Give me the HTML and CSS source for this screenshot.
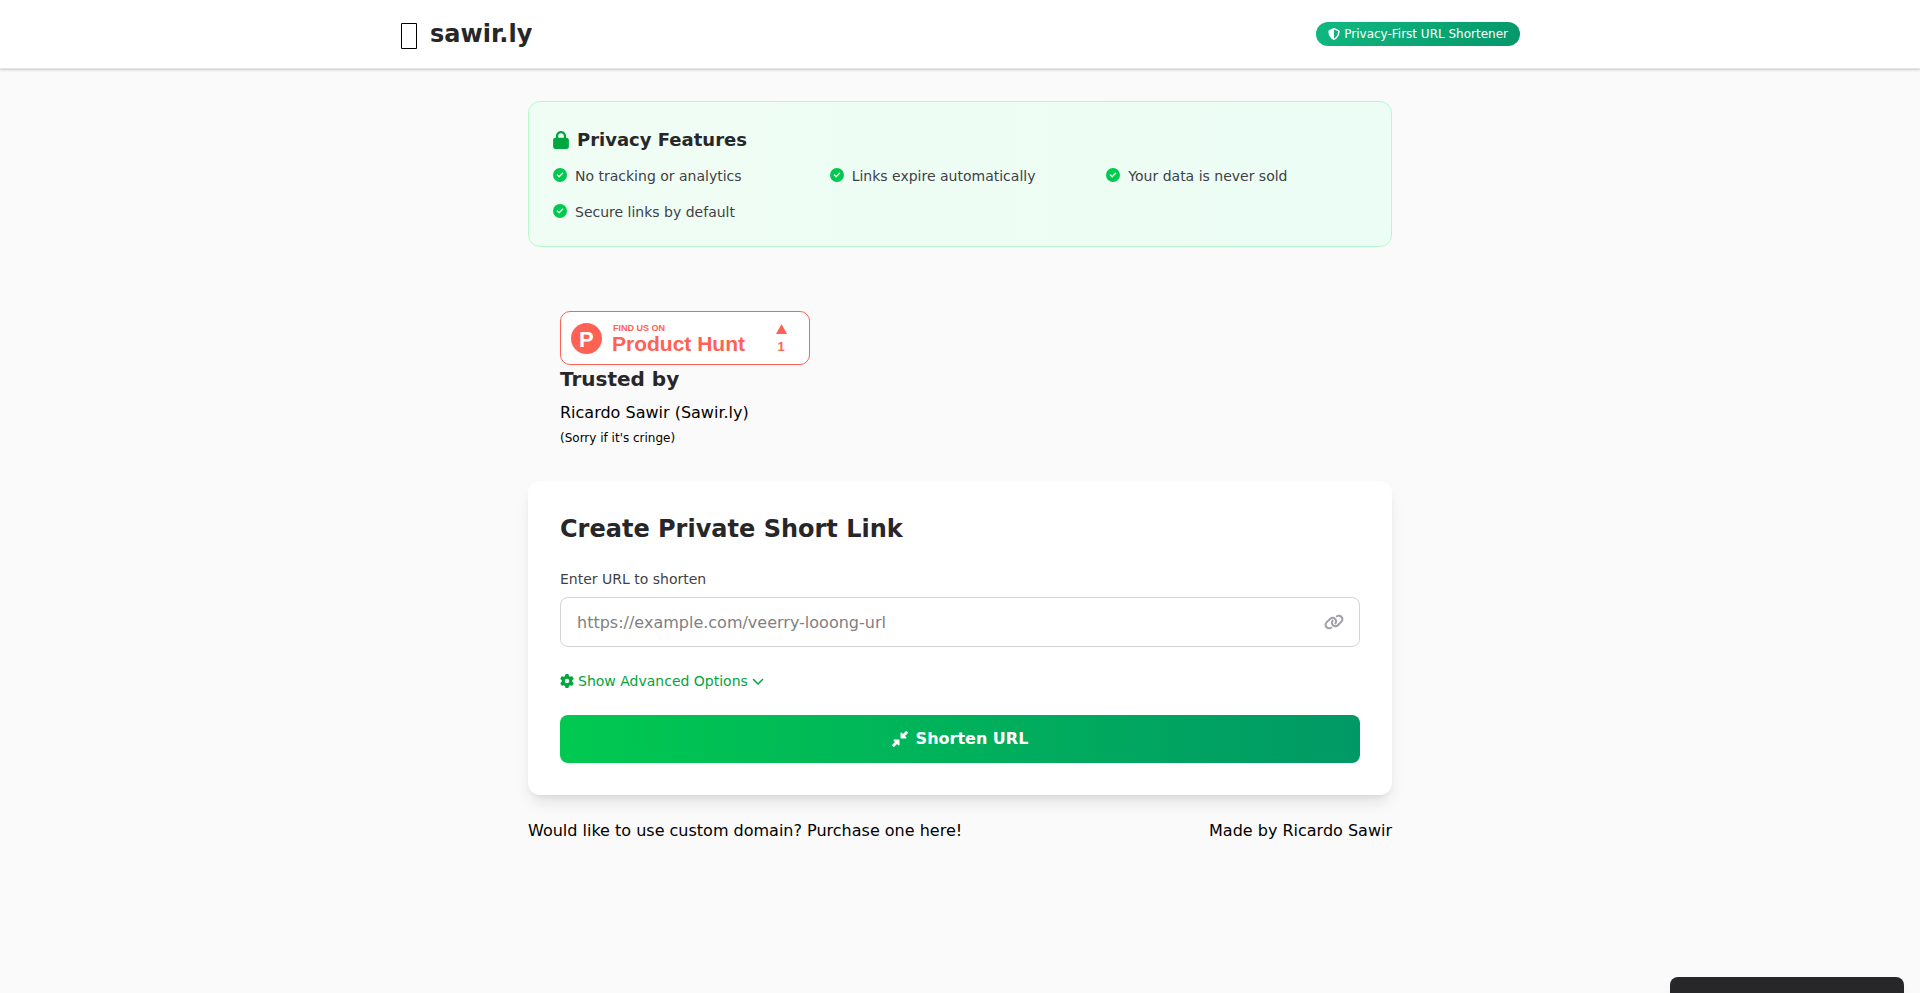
FILE: index.html
```html
<!DOCTYPE html>
<html lang="en">
<head>
<meta charset="utf-8">
<meta name="viewport" content="width=device-width, initial-scale=1">
<title>sawir.ly</title>
<link rel="stylesheet" href="styles.css">
</head>
<body>
<header class="site-header">
  <div class="header-inner">
    <div class="brand">
      <span class="brand-icon"><svg width="18" height="26" viewBox="0 0 18 26" aria-hidden="true"><path d="M1.5 0.5h15v25h-15z" fill="none" stroke="#000"/></svg></span>
      <h1 class="brand-name">sawir.ly</h1>
    </div>
    <span class="pill">
      <svg class="icon icon-12" viewBox="0 0 512 512" aria-hidden="true"><path d="M256 0c4.6 0 9.2 1 13.4 2.9L457.7 82.8c22 9.3 38.4 31 38.3 57.2c-.5 99.2-41.3 280.7-213.6 363.2c-16.7 8-36.1 8-52.8 0C57.3 420.7 16.5 239.2 16 140c-.1-26.2 16.3-47.9 38.3-57.2L242.7 2.9C246.8 1 251.4 0 256 0zm0 66.8V444.8C394 378 431.1 230.1 432 141.4L256 66.8l0 0z"/></svg>
      Privacy-First URL Shortener
    </span>
  </div>
</header>

<main class="page">
  <section class="features">
    <h2 class="features-title">
      <svg class="icon lock" viewBox="0 0 448 512" aria-hidden="true"><path d="M144 144v48H304V144c0-44.2-35.8-80-80-80s-80 35.8-80 80zM80 192V144C80 64.5 144.5 0 224 0s144 64.5 144 144v48h16c35.3 0 64 28.7 64 64V448c0 35.3-28.7 64-64 64H64c-35.3 0-64-28.7-64-64V256c0-35.3 28.7-64 64-64H80z"/></svg>
      Privacy Features
    </h2>
    <ul class="feature-list">
      <li class="feature"><svg class="icon check" viewBox="0 0 512 512" aria-hidden="true"><path d="M256 512A256 256 0 1 0 256 0a256 256 0 1 0 0 512zM369 209L241 337c-9.4 9.4-24.6 9.4-33.9 0l-64-64c-9.4-9.4-9.4-24.6 0-33.9s24.6-9.4 33.9 0l47 47L335 175c9.4-9.4 24.6-9.4 33.9 0s9.4 24.6 0 33.9z"/></svg>No tracking or analytics</li>
      <li class="feature"><svg class="icon check" viewBox="0 0 512 512" aria-hidden="true"><path d="M256 512A256 256 0 1 0 256 0a256 256 0 1 0 0 512zM369 209L241 337c-9.4 9.4-24.6 9.4-33.9 0l-64-64c-9.4-9.4-9.4-24.6 0-33.9s24.6-9.4 33.9 0l47 47L335 175c9.4-9.4 24.6-9.4 33.9 0s9.4 24.6 0 33.9z"/></svg>Links expire automatically</li>
      <li class="feature"><svg class="icon check" viewBox="0 0 512 512" aria-hidden="true"><path d="M256 512A256 256 0 1 0 256 0a256 256 0 1 0 0 512zM369 209L241 337c-9.4 9.4-24.6 9.4-33.9 0l-64-64c-9.4-9.4-9.4-24.6 0-33.9s24.6-9.4 33.9 0l47 47L335 175c9.4-9.4 24.6-9.4 33.9 0s9.4 24.6 0 33.9z"/></svg>Your data is never sold</li>
      <li class="feature"><svg class="icon check" viewBox="0 0 512 512" aria-hidden="true"><path d="M256 512A256 256 0 1 0 256 0a256 256 0 1 0 0 512zM369 209L241 337c-9.4 9.4-24.6 9.4-33.9 0l-64-64c-9.4-9.4-9.4-24.6 0-33.9s24.6-9.4 33.9 0l47 47L335 175c9.4-9.4 24.6-9.4 33.9 0s9.4 24.6 0 33.9z"/></svg>Secure links by default</li>
    </ul>
  </section>

  <section class="trusted">
    <a class="hunt-link" href="#" aria-label="Find us on Product Hunt">
      <svg class="hunt-badge" width="248" height="52" viewBox="1 1 248 52">
        <circle cx="26.5" cy="27.5" r="15.5" fill="#ff6154"/>
        <text x="19" y="36" font-size="22" fill="#fff">P</text>
        <text x="53" y="20" font-size="9" fill="#ff6154">FIND US ON</text>
        <text x="52" y="40" font-size="21" fill="#ff6154">Product Hunt</text>
        <path d="M221.5 13L227 23H216z" fill="#ff6154"/>
        <text x="221" y="40" font-size="13" fill="#ff6154" text-anchor="middle">1</text>
      </svg>
    </a>
    <h2 class="trusted-title">Trusted by</h2>
    <p>Ricardo Sawir (Sawir.ly)</p>
    <p><span class="small">(Sorry if it's cringe)</span></p>
  </section>

  <section class="card">
    <h2 class="card-title">Create Private Short Link</h2>
    <form class="form">
      <div class="field">
        <label class="label" for="url">Enter URL to shorten</label>
        <div class="input-wrap">
          <input class="input" id="url" type="url" placeholder="https://example.com/veerry-looong-url">
          <svg class="icon link-icon" viewBox="0 0 640 512" aria-hidden="true"><path d="M579.8 267.7c56.5-56.5 56.5-148 0-204.5c-50-50-128.8-56.5-186.3-15.4l-1.6 1.1c-14.4 10.3-17.7 30.3-7.4 44.6s30.3 17.7 44.6 7.4l1.6-1.1c32.1-22.9 76-19.3 103.8 8.6c31.5 31.5 31.5 82.5 0 114L422.3 334.8c-31.5 31.5-82.5 31.5-114 0c-27.9-27.9-31.5-71.8-8.6-103.8l1.1-1.6c10.3-14.4 6.9-34.4-7.4-44.6s-34.4-6.9-44.6 7.4l-1.1 1.6C206.5 251.2 213 330 263 380c56.5 56.5 148 56.5 204.5 0L579.8 267.7zM60.2 244.3c-56.5 56.5-56.5 148 0 204.5c50 50 128.8 56.5 186.3 15.4l1.6-1.1c14.4-10.3 17.7-30.3 7.4-44.6s-30.3-17.7-44.6-7.4l-1.6 1.1c-32.1 22.9-76 19.3-103.8-8.6C74 372 74 321 105.5 289.5L217.7 177.2c31.5-31.5 82.5-31.5 114 0c27.9 27.9 31.5 71.8 8.6 103.9l-1.1 1.6c-10.3 14.4-6.9 34.4 7.4 44.6s34.4 6.9 44.6-7.4l1.1-1.6C433.5 260.8 427 182 377 132c-56.5-56.5-148-56.5-204.5 0L60.2 244.3z"/></svg>
        </div>
      </div>
      <button class="advanced" type="button">
        <svg class="icon icon-14" viewBox="0 0 512 512" aria-hidden="true"><path d="M495.9 166.6c3.2 8.7 .5 18.4-6.4 24.6l-43.3 39.4c1.1 8.3 1.7 16.8 1.7 25.4s-.6 17.1-1.7 25.4l43.3 39.4c6.9 6.2 9.6 15.9 6.4 24.6c-4.4 11.9-9.7 23.3-15.8 34.3l-4.7 8.1c-6.6 11-14 21.4-22.1 31.2c-5.9 7.2-15.7 9.6-24.5 6.8l-55.7-17.7c-13.4 10.3-28.2 18.9-44 25.4l-12.5 57.1c-2 9.1-9 16.3-18.2 17.8c-13.8 2.3-28 3.5-42.5 3.5s-28.7-1.2-42.5-3.5c-9.2-1.5-16.2-8.7-18.2-17.8l-12.5-57.1c-15.8-6.5-30.6-15.1-44-25.4L83.1 425.9c-8.8 2.8-18.6 .3-24.5-6.8c-8.1-9.8-15.5-20.2-22.1-31.2l-4.7-8.1c-6.1-11-11.4-22.4-15.8-34.3c-3.2-8.7-.5-18.4 6.4-24.6l43.3-39.4C64.6 273.1 64 264.6 64 256s.6-17.1 1.7-25.4L22.4 191.2c-6.9-6.2-9.6-15.9-6.4-24.6c4.4-11.9 9.7-23.3 15.8-34.3l4.7-8.1c6.6-11 14-21.4 22.1-31.2c5.9-7.2 15.7-9.6 24.5-6.8l55.7 17.7c13.4-10.3 28.2-18.9 44-25.4l12.5-57.1c2-9.1 9-16.3 18.2-17.8C227.3 1.2 241.5 0 256 0s28.7 1.2 42.5 3.5c9.2 1.5 16.2 8.7 18.2 17.8l12.5 57.1c15.8 6.5 30.6 15.1 44 25.4l55.7-17.7c8.8-2.8 18.6-.3 24.5 6.8c8.1 9.8 15.5 20.2 22.1 31.2l4.7 8.1c6.1 11 11.4 22.4 15.8 34.3zM256 336a80 80 0 1 0 0-160 80 80 0 1 0 0 160z"/></svg>
        Show Advanced Options
        <svg class="icon icon-12" viewBox="0 0 512 512" aria-hidden="true"><path d="M233.4 406.6c12.5 12.5 32.8 12.5 45.3 0l192-192c12.5-12.5 12.5-32.8 0-45.3s-32.8-12.5-45.3 0L256 338.7 86.6 169.4c-12.5-12.5-32.8-12.5-45.3 0s-12.5 32.8 0 45.3l192 192z"/></svg>
      </button>
      <button class="submit" type="submit">
        <svg class="icon icon-16" viewBox="0 0 512 512" aria-hidden="true"><path d="M439 7c9.4-9.4 24.6-9.4 33.9 0l32 32c9.4 9.4 9.4 24.6 0 33.9l-87 87 39 39c6.9 6.9 8.9 17.2 5.2 26.2s-12.5 14.8-22.2 14.8H296c-13.3 0-24-10.7-24-24V72c0-9.7 5.8-18.5 14.8-22.2s19.3-1.7 26.2 5.2l39 39L439 7zM72 272H216c13.3 0 24 10.7 24 24V440c0 9.7-5.8 18.5-14.8 22.2s-19.3 1.7-26.2-5.2l-39-39L73 505c-9.4 9.4-24.6 9.4-33.9 0L7 473c-9.4-9.4-9.4-24.6 0-33.9l87-87L55 313c-6.9-6.9-8.9-17.2-5.2-26.2s12.5-14.8 22.2-14.8z"/></svg>
        Shorten URL
      </button>
    </form>
  </section>

  <footer class="footer">
    <a href="#">Would like to use custom domain? Purchase one here!</a>
    <a href="#">Made by Ricardo Sawir</a>
  </footer>
</main>

<div class="toast"></div>
</body>
</html>
```
FILE: styles.css
```css
*, *::before, *::after {
  box-sizing: border-box;
}

body, h1, h2, p, ul {
  margin: 0;
  padding: 0;
}

body {
  min-height: 100vh;
  background: #fafafa;
  color: #000;
  font-family: "DejaVu Sans", sans-serif;
  font-size: 16px;
  line-height: 24px;
}

button, input {
  font: inherit;
}

a {
  color: inherit;
  text-decoration: none;
}

.icon {
  flex: none;
  fill: currentColor;
}

.icon-12 {
  width: 12px;
  height: 12px;
}

.icon-14 {
  width: 14px;
  height: 14px;
}

.icon-16 {
  width: 16px;
  height: 16px;
}

/* Header */
.site-header {
  background: #fff;
  border-bottom: 1px solid #e4e4e7;
  box-shadow: 0 1px 3px rgba(0, 0, 0, 0.1), 0 1px 2px rgba(0, 0, 0, 0.1);
}

.header-inner {
  display: flex;
  align-items: center;
  justify-content: space-between;
  max-width: 1152px;
  margin: 0 auto;
  padding: 16px;
}

.brand {
  display: flex;
  align-items: center;
  gap: 12px;
}

.brand-icon {
  display: flex;
  align-items: center;
  height: 36px;
  padding-top: 4px;
}

.brand-name {
  color: #27272a;
  font-size: 24px;
  line-height: 32px;
}

.pill {
  display: flex;
  align-items: center;
  gap: 4px;
  padding: 4px 12px;
  border-radius: 12px;
  background: linear-gradient(135deg, #10b981, #059669);
  color: #fff;
  font-size: 12px;
  line-height: 16px;
}

/* Main column */
.page {
  max-width: 896px;
  margin: 0 auto;
  padding: 32px 16px;
}

.features {
  margin-bottom: 32px;
  padding: 24px;
  border: 1px solid #b9f8cf;
  border-radius: 12px;
  background: linear-gradient(to right, #f0fdf4, #ecfdf5);
}

.features-title {
  display: flex;
  align-items: center;
  gap: 8px;
  margin-bottom: 12px;
  color: #27272a;
  font-size: 18px;
  line-height: 28px;
}

.lock {
  width: 16px;
  height: 18px;
  color: #00a63e;
}

.feature-list {
  display: grid;
  grid-template-columns: repeat(3, 1fr);
  gap: 16px;
  list-style: none;
}

.feature {
  display: flex;
  align-items: flex-start;
  gap: 8px;
  color: #3f3f46;
  font-size: 14px;
  line-height: 20px;
}

.check {
  width: 14px;
  height: 14px;
  margin-top: 2px;
  color: #00c950;
}

.trusted {
  padding: 32px;
}

.hunt-link {
  display: block;
  width: 250px;
  border: 1px solid #ff6154;
  border-radius: 10px;
  background: #fff;
}

.hunt-badge {
  display: block;
  font-family: "Liberation Sans", Arial, sans-serif;
  font-weight: 700;
}

.trusted-title {
  margin-bottom: 8px;
  color: #27272a;
  font-size: 20px;
  line-height: 28px;
}

.small {
  font-size: 12px;
  line-height: 16px;
}

.card {
  padding: 32px;
  border-radius: 12px;
  background: #fff;
  box-shadow: 0 10px 15px -3px rgba(0, 0, 0, 0.1), 0 4px 6px -4px rgba(0, 0, 0, 0.1);
}

.card-title {
  margin-bottom: 24px;
  color: #27272a;
  font-size: 24px;
  line-height: 32px;
}

.form {
  display: flex;
  flex-direction: column;
  gap: 24px;
}

.label {
  display: block;
  margin-bottom: 8px;
  color: #3f3f46;
  font-size: 14px;
  line-height: 20px;
}

.input-wrap {
  position: relative;
}

.input {
  display: block;
  width: 100%;
  height: 50px;
  padding: 12px 48px 12px 16px;
  border: 1px solid #d4d4d8;
  border-radius: 8px;
  background: #fff;
  color: #000;
}

.input::placeholder {
  color: #808080;
}

.link-icon {
  position: absolute;
  top: 17px;
  right: 16px;
  width: 20px;
  height: 16px;
  color: #9f9fa9;
}

.advanced {
  display: flex;
  align-items: center;
  align-self: flex-start;
  gap: 4px;
  padding: 0;
  border: 0;
  background: none;
  color: #00a63e;
  font-size: 14px;
  line-height: 20px;
}

.submit {
  display: flex;
  align-items: center;
  justify-content: center;
  gap: 8px;
  padding: 12px 24px;
  border: 0;
  border-radius: 8px;
  background: linear-gradient(to right, #00c950, #009966);
  color: #fff;
  font-weight: 700;
}

.footer {
  display: flex;
  justify-content: space-between;
  margin-top: 24px;
}

.toast {
  position: fixed;
  right: 16px;
  bottom: -32px;
  width: 234px;
  height: 48px;
  border-radius: 8px;
  background: #27272a;
  box-shadow: 0 10px 15px -3px rgba(0, 0, 0, 0.1), 0 4px 6px -4px rgba(0, 0, 0, 0.1);
}
```
